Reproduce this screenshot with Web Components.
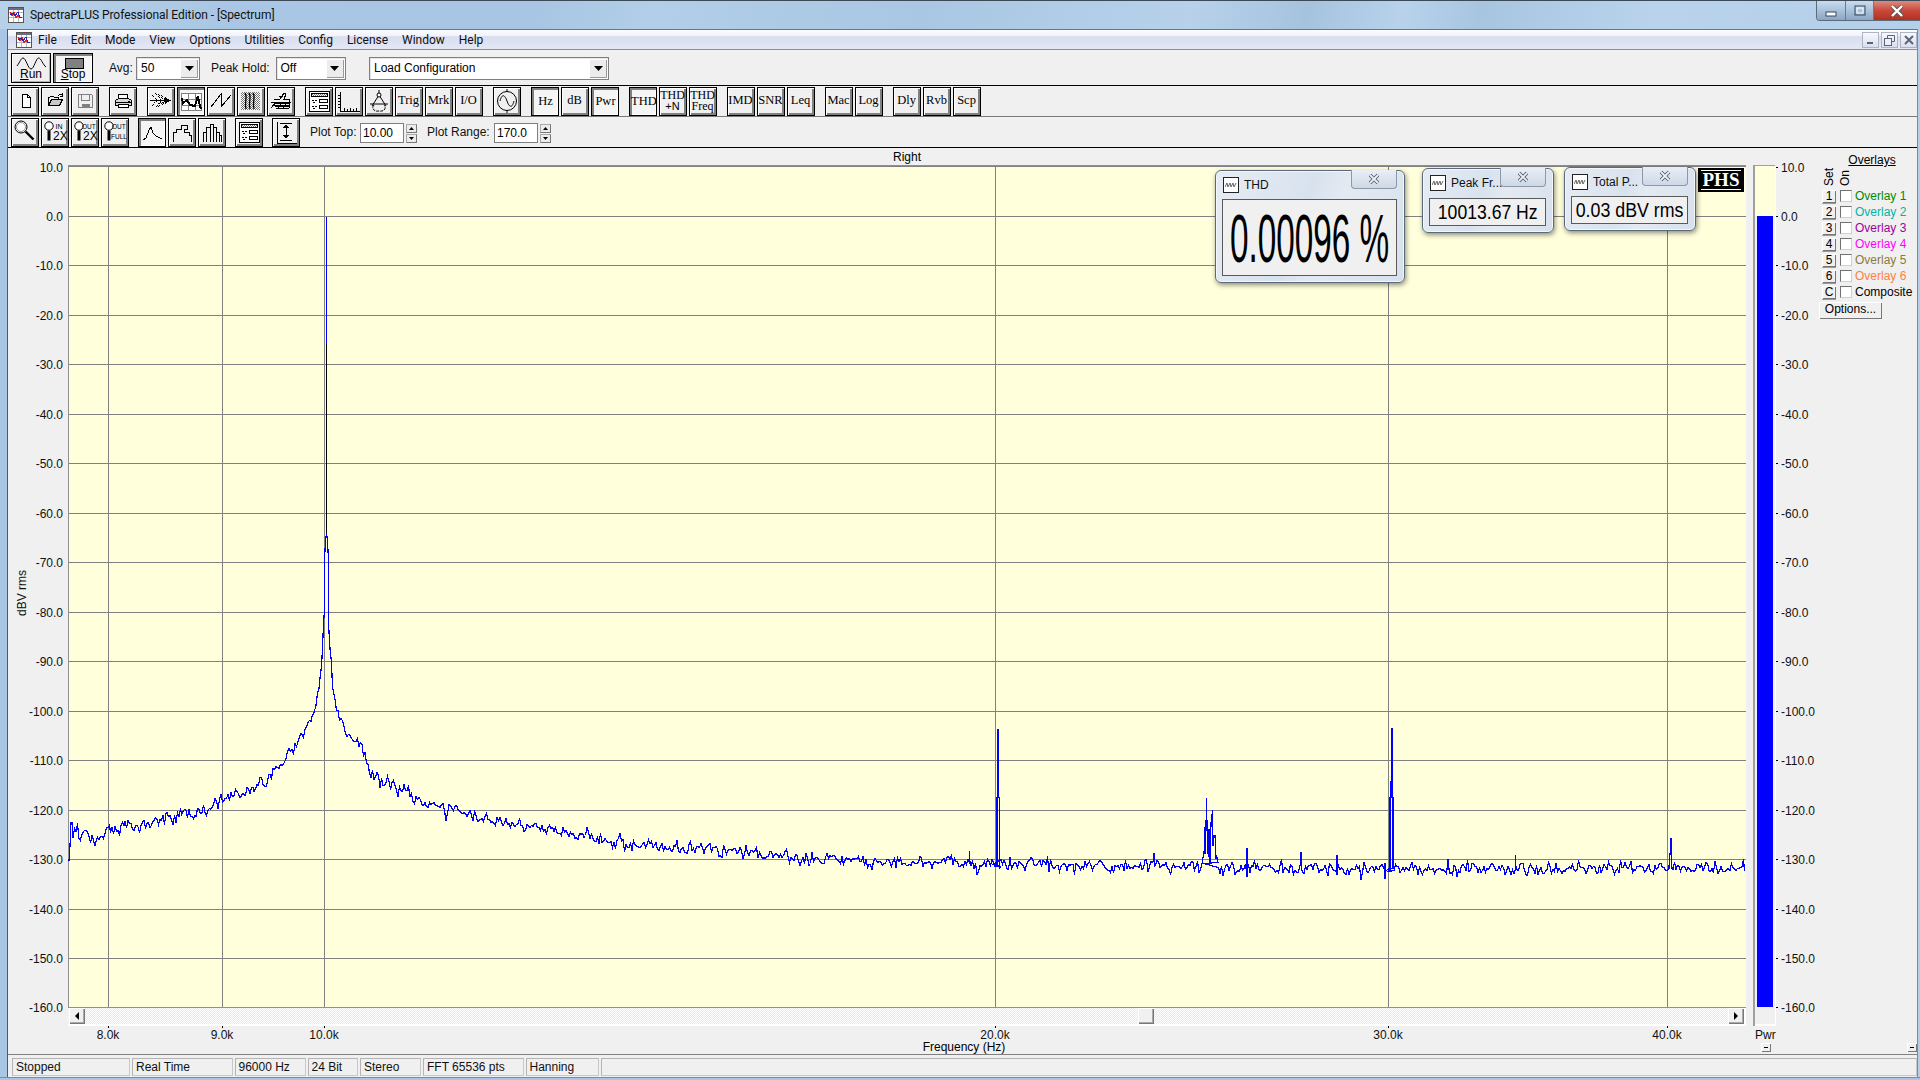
<!DOCTYPE html>
<html><head><meta charset="utf-8"><title>SpectraPLUS</title>
<style>
html,body{margin:0;padding:0;background:#f0f0f0;overflow:hidden}
body{font:12px "Liberation Sans",Arial,sans-serif;color:#000}
</style></head><body>
<sp-app>
  <sp-titlebar slot="top" text="SpectraPLUS Professional Edition - [Spectrum]"></sp-titlebar>
  <sp-menubar slot="menu" items="File,Edit,Mode,View,Options,Utilities,Config,License,Window,Help"></sp-menubar>

  <sp-toolbar slot="bars" edge="#000" h="36" gap="0">
    <sp-tool big icon="run" label="Run" under="R"></sp-tool>
    <sp-tool big pressed icon="stop" label="Stop" under="S" style="margin-left:2px"></sp-tool>
    <sp-label style="margin-left:16px;width:27px">Avg:</sp-label>
    <sp-combo value="50" style="width:64px"></sp-combo>
    <sp-label style="margin-left:11px;width:64.5px">Peak Hold:</sp-label>
    <sp-combo value="Off" style="width:70px"></sp-combo>
    <sp-combo value="Load Configuration" style="width:240px;margin-left:23.5px"></sp-combo>
  </sp-toolbar>

  <sp-toolbar slot="bars" edge="#7a7a7a" h="31" gap="10">
    <sp-group>
      <sp-tool icon="new"></sp-tool><sp-tool icon="open"></sp-tool><sp-tool icon="save"></sp-tool>
    </sp-group>
    <sp-group><sp-tool icon="print"></sp-tool></sp-group>
    <sp-group>
      <sp-tool icon="fwd"></sp-tool><sp-tool pressed icon="time"></sp-tool><sp-tool icon="saw"></sp-tool><sp-tool icon="water"></sp-tool><sp-tool icon="d3"></sp-tool>
    </sp-group>
    <sp-group>
      <sp-tool icon="form"></sp-tool><sp-tool icon="axis"></sp-tool><sp-tool icon="compass"></sp-tool><sp-tool label="Trig" serif></sp-tool><sp-tool label="Mrk" serif></sp-tool><sp-tool label="I/O" serif></sp-tool>
    </sp-group>
    <sp-group><sp-tool icon="gen"></sp-tool></sp-group>
    <sp-group>
      <sp-tool pressed label="Hz" serif></sp-tool><sp-tool label="dB" serif></sp-tool><sp-tool pressed label="Pwr" serif></sp-tool>
    </sp-group>
    <sp-group>
      <sp-tool pressed label="THD" serif></sp-tool><sp-tool label="THD" sub="+N" serif></sp-tool><sp-tool label="THD" sub="Freq" serif></sp-tool>
    </sp-group>
    <sp-group>
      <sp-tool label="IMD" serif></sp-tool><sp-tool label="SNR" serif></sp-tool><sp-tool label="Leq" serif></sp-tool>
    </sp-group>
    <sp-group>
      <sp-tool label="Mac" serif></sp-tool><sp-tool label="Log" serif></sp-tool>
    </sp-group>
    <sp-group>
      <sp-tool label="Dly" serif></sp-tool><sp-tool label="Rvb" serif></sp-tool><sp-tool label="Scp" serif></sp-tool>
    </sp-group>
  </sp-toolbar>

  <sp-toolbar slot="bars" edge="#000" h="31" gap="9">
    <sp-group>
      <sp-tool icon="mag"></sp-tool><sp-tool icon="in2"></sp-tool><sp-tool icon="out2"></sp-tool><sp-tool icon="outfull"></sp-tool>
    </sp-group>
    <sp-group>
      <sp-tool pressed icon="line"></sp-tool><sp-tool icon="stair"></sp-tool><sp-tool icon="bars"></sp-tool>
    </sp-group>
    <sp-group><sp-tool icon="form"></sp-tool></sp-group>
    <sp-group><sp-tool icon="range"></sp-tool></sp-group>
    <sp-label style="width:50px;margin-left:1px">Plot Top:</sp-label>
    <sp-spin value="10.00" style="margin-left:-9px"></sp-spin>
    <sp-label style="width:64px;margin-left:1px">Plot Range:</sp-label>
    <sp-spin value="170.0" style="margin-left:-6px"></sp-spin>
  </sp-toolbar>

  <sp-chart slot="main"></sp-chart>
  <sp-meter slot="main"></sp-meter>
  <sp-overlays slot="main"></sp-overlays>

  <sp-statusbar slot="status" cells="Stopped:118,Real Time:100.5,96000 Hz:71,24 Bit:50.5,Stereo:61,FFT 65536 pts:100.5,Hanning:73,:0"></sp-statusbar>

  <sp-float slot="float" win-title="THD" value="0.00096 %" style="left:1215px;top:170px;width:190px;height:113px;--fs:68px;--sx:.49;--top:28px;--closew:46px;--closeh:19px"></sp-float>
  <sp-float slot="float" win-title="Peak Fr..." value="10013.67 Hz" style="left:1422px;top:168px;width:132px;height:65px;--fs:20px;--sx:.88;--top:29px;--closew:46px;--closeh:19px"></sp-float>
  <sp-float slot="float" win-title="Total P..." value="0.03 dBV rms" style="left:1564px;top:167px;width:132px;height:64px;--fs:20px;--sx:.89;--top:28px;--closew:46px;--closeh:19px"></sp-float>
  <sp-badge slot="float" style="left:1698px;top:168px">PHS</sp-badge>
</sp-app>

<template id="app-t">
<style>
:host{display:block;position:relative;width:1920px;height:1080px;overflow:hidden;background:#a9c7e4}
.client{display:flex;flex-direction:column;position:absolute;z-index:0;inset:29px 3px 3px 7px;border-left:1px solid #4d5a68;background:#f0f0f0}
.main{display:flex;flex:1;min-height:0}
.bottom{position:absolute;left:0;right:0;bottom:0;height:3px;background:#a9c7e4;border-top:1px solid #7d8a98;box-sizing:border-box}
.right{position:absolute;top:29px;bottom:0;right:0;width:3px;background:#b3cfe9;border-left:1px solid #7d8a98;box-sizing:border-box}
</style>
<slot name="top"></slot>
<div class="client">
  <slot name="menu"></slot>
  <slot name="bars"></slot>
  <div class="main"><slot name="main"></slot></div>
  <slot name="status"></slot>
</div>
<div class="right"></div><div class="bottom"></div>
<slot name="float"></slot>
</template>

<script>
function shadow(el,html){const r=el.attachShadow({mode:'open'});r.innerHTML=html;return r;}
const appIcon=`<svg width="16" height="16" viewBox="0 0 16 16" shape-rendering="crispEdges"><rect x=".5" y=".5" width="15" height="15" fill="#fff" stroke="#555"/><path d="M1 5.5h14M1 10.5h14M5.5 1v14M10.5 1v14" stroke="#b8b8b8"/><rect x="1" y="1" width="14" height="2" fill="#6d6d80"/><path d="M2 5l2 4 2-4 2 6 2-3 2 3 2-1" fill="none" stroke="#d22"/><path d="M2 8l3-2 2 3 3-4 2 6 2-1" fill="none" stroke="#22c"/></svg>`;

customElements.define('sp-app',class extends HTMLElement{constructor(){super();
  this.attachShadow({mode:'open'}).appendChild(document.getElementById('app-t').content.cloneNode(true));}});

customElements.define('sp-titlebar',class extends HTMLElement{connectedCallback(){
 shadow(this,`<style>
 :host{display:flex;align-items:center;height:29px;box-sizing:border-box;border-top:1px solid #3c4a58;position:relative;
 background:linear-gradient(100deg,#b8d1e9 0,#a9c7e4 12%,#a8c6e3 28%,#b2cee8 34%,#a9c7e3 48%,#b7d1ea 62%,#a6c3de 68%,#b8d2eb 73%,#a8c5e0 77%,#b9d3ec 86%,#b4cfe9 100%);
 padding-left:8px;gap:6px;font:12px Roboto,"Open Sans",sans-serif;letter-spacing:-.04px;color:#111}
 .caps{position:absolute;right:0;top:0;display:flex;height:20px;border:1px solid #5b6b7c;border-top:0;border-right:0;border-radius:0 0 0 4px;overflow:hidden;box-sizing:border-box}
 .c{display:grid;place-items:center;height:100%;border-right:1px solid #6a7a8c;background:linear-gradient(#c9dbee,#a9c2dc 50%,#8ba6c4)}
 .x{background:linear-gradient(#dc8c7e,#c9493a 50%,#b23020);border:0}
 </style>${appIcon}<span>${this.getAttribute('text')}</span>
 <div class="caps">
 <div class="c" style="width:28px"><svg width="12" height="6" style="margin-top:7px"><rect x="1" y="1" width="10" height="4" fill="#fff" stroke="#39485a"/></svg></div>
 <div class="c" style="width:27px"><svg width="12" height="11"><rect x="1" y="1" width="10" height="9" fill="none" stroke="#39485a"/><rect x="3" y="3" width="6" height="5" fill="none" stroke="#fff"/></svg></div>
 <div class="c x" style="width:46px"><svg width="14" height="12"><path d="M2 1l10 10M12 1L2 11" stroke="#555" stroke-width="4"/><path d="M2 1l10 10M12 1L2 11" stroke="#fff" stroke-width="2.4"/></svg></div>
 </div>`);
}});

customElements.define('sp-menubar',class extends HTMLElement{connectedCallback(){
 const items=this.getAttribute('items').split(',').map(t=>`<span>${t}</span>`).join('');
 shadow(this,`<style>
 :host{display:flex;align-items:center;height:21px;box-sizing:border-box;border-top:1px solid #6c7580;border-bottom:1px solid #8b8f9a;position:relative;
 background:linear-gradient(#fbfcfe 0,#f1f4fa 30%,#d8ddf0 35%,#e4e8f5 100%);padding-left:8px;font:12px Roboto,"Open Sans",sans-serif;color:#111;flex:none}
 .m{display:flex;gap:13.9px;margin-left:6px}
 .b{position:absolute;right:0;top:2px;display:flex;gap:2px}
 .b div{width:17px;height:16px;box-sizing:border-box;border:1px solid #aeb4c4;background:linear-gradient(#f8f9fd,#d9dff0);display:grid;place-items:center}
 </style>${appIcon}<div class="m">${items}</div>
 <div class="b">
 <div><svg width="9" height="9"><rect x="1" y="6" width="6" height="2" fill="#5a6472"/></svg></div>
 <div><svg width="11" height="11" fill="none" stroke="#5a6472"><path d="M3.5 3V.5h7v6H8"/><rect x=".5" y="3.5" width="7" height="7" fill="#eef"/></svg></div>
 <div><svg width="10" height="10"><path d="M1 1l8 8M9 1L1 9" stroke="#5a6472" stroke-width="2"/></svg></div>
 </div>`);
}});

customElements.define('sp-toolbar',class extends HTMLElement{connectedCallback(){
 shadow(this,`<style>
 :host{display:flex;align-items:center;flex:none;box-sizing:border-box;padding:0 0 0 3px;height:${this.getAttribute('h')}px;border-bottom:1px solid ${this.getAttribute('edge')};gap:${this.getAttribute('gap')}px}
 </style><slot></slot>`);
}});
customElements.define('sp-group',class extends HTMLElement{connectedCallback(){
 shadow(this,`<style>:host{display:flex;gap:2px}</style><slot></slot>`);
}});
customElements.define('sp-label',class extends HTMLElement{connectedCallback(){
 shadow(this,`<style>:host{display:block;flex:none;white-space:nowrap;font:12px "Liberation Sans",sans-serif;color:#111}</style><slot></slot>`);
}});

const ICONS={
 run:`<path d="M6 13C9 9 10 5 12 5C15 5 17 16 20 16C23 16 25 5 27.6 5C30 5 32 12 35 14" fill="none" stroke="#000"/>`,
 stop:`<rect x="12.5" y="5.5" width="18" height="10" fill="#808080" stroke="#000"/>`,
 new:`<path d="M11.5 7.5h5l3 3v10h-8z" fill="#fff" stroke="#000"/><path d="M16.5 7.5v3h3" fill="none" stroke="#000"/>`,
 open:`<path d="M7.5 18.5v-8h1l1-1h3l1 1h4v2" fill="none" stroke="#000"/><path d="M7.5 18.5h11l3-6h-11z" fill="#c8c8c8" stroke="#000"/><path d="M17 9c1-2 3-2 4-1M21.5 6v3h-3" fill="none" stroke="#000"/>`,
 save:`<path d="M7.5 7.5h13l1 1v12h-14z" fill="#f0f0f0" stroke="#808080"/><rect x="10.5" y="7.5" width="8" height="6" fill="none" stroke="#808080"/><rect x="10.5" y="16.5" width="8" height="4" fill="#808080"/>`,
 print:`<path d="M9.5 7.5h9v5h-9z" fill="#fff" stroke="#000"/><path d="M6.5 13.5l3-2h10l3 2v5h-16z" fill="#d8d8d8" stroke="#000"/><path d="M7 15.5h15" stroke="#000"/><rect x="9.5" y="17.5" width="10" height="3" fill="#fff" stroke="#000"/><rect x="19" y="14" width="2" height="1" fill="#000"/>`,
 fwd:`<path d="M3 13.5h21" stroke="#000"/><path d="M5 8l5 5.5-5 5.5M8 6l7 7.5-7 7.5M11 7l7 6.5-7 6.5M14 8l6 5.5-6 5.5" fill="none" stroke="#000" stroke-dasharray="1 1"/><path d="M18 10l5 3.5-5 3.5z" fill="#000"/>`,
 time:`<rect x="4.5" y="6.5" width="20" height="17" fill="#fff" stroke="#808080"/><path d="M11.5 6v17M18.5 6v17M4 12.5h20M4 18.5h20" stroke="#808080"/><path d="M5 11l1 5 4-3 3 5 5 1 3-10 2 10 1 3" fill="none" stroke="#000" stroke-width="2"/>`,
 saw:`<path d="M4 20L14 7v13L24 8" fill="none" stroke="#000"/>`,
 water:`<rect x="4" y="5" width="19" height="18" fill="url(#dither)"/><path d="M8 6c3 4-1 8 1 16M12 6c3 4-1 8 1 16M16 6c3 4-1 8 1 16" fill="none" stroke="#000" stroke-width="1.3" shape-rendering="auto"/>`,
 d3:`<path d="M4 21l5-6h15M5 18h17M4 15h6M7 12h6l4-6 2 1-2 5h6l-1 9H9" fill="none" stroke="#000"/><path d="M8 16h14M8 19h14M12 9h4M11 21l4-6M16 21l4-6" stroke="#000"/>`,
 form:`<rect x="4.5" y="4.5" width="20" height="20" fill="#fff" stroke="#000"/><rect x="6.5" y="6.5" width="16" height="3" fill="url(#dither)" stroke="#000"/><rect x="14.5" y="12.5" width="8" height="3" fill="#fff" stroke="#000"/><rect x="14.5" y="18.5" width="8" height="3" fill="#fff" stroke="#000"/><path d="M7 13h2v1H7zM10 13h2v1h-2zM8 15h2v1H8zM7 19h2v1H7zM10 19h2v1h-2zM8 21h2v1H8z" fill="#000"/>`,
 axis:`<path d="M5.5 5v19H25" fill="none" stroke="#000"/><path d="M3 8h2M3 11h2M3 14h2M3 17h2M3 20h2M9.5 21v3M12.5 22v2M15.5 21v3M18.5 22v2M21.5 21v3" stroke="#000"/>`,
 compass:`<path d="M14 3v5M14 8L7 19M14 8l7 11M5 17h18" stroke="#000" fill="none"/><circle cx="14" cy="8" r="2" fill="#fff" stroke="#000"/><path d="M9 18c-3 3 0 7 5 6 5 1 8-3 5-6" fill="none" stroke="#000" stroke-dasharray="3 1"/>`,
 gen:`<circle cx="14" cy="14" r="9.5" fill="none" stroke="#000"/><path d="M14 2v3M14 23v3" stroke="#000"/><path d="M7 14c2-8 5-6 7 0s5 8 7 0" fill="none" stroke="#000"/>`,
 mag:`<circle cx="10" cy="9" r="6" fill="#fff" stroke="#000"/><circle cx="10" cy="9" r="4.5" fill="none" stroke="#999"/><path d="M14.5 13.5l8 8" stroke="#000" stroke-width="2.4"/>`,
 in2:`<circle cx="8" cy="8" r="4.2" fill="#fff" stroke="#000"/><path d="M8 12.5v10" stroke="#000" stroke-width="3"/><text x="14.5" y="11" font-family="Liberation Sans" font-size="7">IN</text><text x="12" y="22" font-family="Liberation Sans" font-size="12">2X</text>`,
 out2:`<circle cx="8" cy="8" r="4.2" fill="#fff" stroke="#000"/><path d="M8 12.5v10" stroke="#000" stroke-width="3"/><text x="11" y="11" font-family="Liberation Sans" font-size="6.5">OUT</text><text x="12" y="22" font-family="Liberation Sans" font-size="12">2X</text>`,
 outfull:`<circle cx="8" cy="8" r="4.2" fill="#fff" stroke="#000"/><path d="M8 12.5v10" stroke="#000" stroke-width="3"/><text x="11" y="11" font-family="Liberation Sans" font-size="6.5">OUT</text><text x="10" y="20.5" font-family="Liberation Sans" font-size="6.5">FULL</text>`,
 line:`<path d="M5 22l3-2 3-8 2-3 2 6 3 3 6 3" fill="none" stroke="#000"/>`,
 stair:`<path d="M5.5 24v-10h3v-3h5v-4h6v4h-3v3h5v3h2v7" fill="none" stroke="#000"/>`,
 bars:`<path d="M5.5 24V14h3V9h4V6h3v3h3v5h3v3h2v7M8.5 14v10M12.5 9v15M15.5 9v15M18.5 14v10M21.5 17v7" fill="none" stroke="#000"/>`,
 range:`<path d="M5.5 4v21H25M8 5h12M8 22h12" fill="none" stroke="#000"/><path d="M14 7v13" stroke="#000"/><path d="M11 10l3-4 3 4zM11 17l3 4 3-4z" fill="#000"/>`
};

customElements.define('sp-tool',class extends HTMLElement{connectedCallback(){
 const big=this.hasAttribute('big'),pressed=this.hasAttribute('pressed'),ic=this.getAttribute('icon'),
   label=this.getAttribute('label')||'',sub=this.getAttribute('sub'),under=this.getAttribute('under');
 const w=big?40:28,h=big?30:29;
 let body='';
 const labelHtml=under?`<u>${under}</u>${label.slice(1)}`:label;
 if(big){
  body=`<svg width="38" height="28" viewBox="1 1 38 28">${ICONS[ic]}</svg><span class="biglab">${labelHtml}</span>`;
 }else if(ic){
  body=`<svg width="26" height="27" viewBox="1 1 26 27" shape-rendering="${/mag|in2|out|gen|compass/.test(ic)?'auto':'crispEdges'}"><defs><pattern id="dither" width="2" height="2" patternUnits="userSpaceOnUse"><rect width="2" height="2" fill="#fff"/><rect width="1" height="1" fill="#777"/><rect x="1" y="1" width="1" height="1" fill="#777"/></pattern></defs>${ICONS[ic]}</svg>`;
 }else if(sub){
  body=`<span class="two"><span>${label}</span><span class="${sub==='+N'?'sans':''}">${sub}</span></span>`;
 }else body=`<span>${label}</span>`;
 shadow(this,`<style>
 :host{display:grid;place-items:center;flex:none;box-sizing:border-box;position:relative;width:${w}px;height:${h}px;border:1px solid #000;background:${pressed?'#f5f5f5':'#f0f0f0'};
 box-shadow:${pressed?'inset 2px 2px 0 #808080,inset -1px -1px 0 #fff':(big?'inset 1px 1px 0 #fff,inset -1px -1px 0 #b0b0b0':'inset 1px 1px 0 #fff,inset -2px -2px 0 #808080')};
 font:12.5px "Liberation Serif",serif;color:#000;overflow:hidden}
 svg{position:absolute;left:0;top:0}
 span{display:block;white-space:nowrap;line-height:13px;${pressed?'padding:1px 0 0 1px':'margin:-1px 0 0 -1px'}}
 .two{text-align:center;line-height:11px;font-size:12px}.two span{padding:0;margin:0;line-height:11px}
 .sans{font:11px "Liberation Sans",sans-serif}
 .biglab{position:absolute;left:0;right:0;bottom:1px;text-align:center;font:12px "Liberation Sans",sans-serif;padding:0;margin:0}
 </style>${body}`);
}});

customElements.define('sp-combo',class extends HTMLElement{connectedCallback(){
 shadow(this,`<style>
 :host{display:flex;flex:none;align-items:center;box-sizing:border-box;height:23px;background:#fff;border:1px solid #7f7f7f;position:relative;padding-left:4px;margin-top:1px;
 font:12px "Liberation Sans",sans-serif;color:#000;box-shadow:inset 1px 1px 0 #e6e6e6}
 .a{position:absolute;right:1px;top:1px;bottom:1px;width:18px;background:#ececec;box-shadow:inset 1px 1px 0 #fff,inset -1px -1px 0 #9a9a9a;display:grid;place-items:center}
 </style><span>${this.getAttribute('value')}</span><div class="a"><svg width="9" height="5"><path d="M0 0h9L4.5 5z" fill="#000"/></svg></div>`);
}});
customElements.define('sp-spin',class extends HTMLElement{connectedCallback(){
 shadow(this,`<style>
 :host{display:flex;flex:none;align-items:center;gap:2px;font:12px "Liberation Sans",sans-serif;color:#000;margin-top:1px}
 .i{box-sizing:border-box;width:44px;height:20px;background:#fff;border:1px solid #7f7f7f;padding:2px 2px;line-height:14px}
 .s{display:flex;flex-direction:column;width:11px;height:19px;gap:1px;margin-top:1px}
 .s div{flex:1;background:#ececec;border:1px solid #aaa;border-right-color:#777;border-bottom-color:#777;box-sizing:border-box;display:grid;place-items:center}
 </style><div class="i">${this.getAttribute('value')}</div><div class="s"><div><svg width="5" height="3"><path d="M0 3h5L2.5 0z"/></svg></div><div><svg width="5" height="3"><path d="M0 0h5L2.5 3z"/></svg></div></div>`);
}});

/* ------- spectrum trace ------- */
function rng(seed){return()=>{seed|=0;seed=seed+0x6D2B79F5|0;let t=Math.imul(seed^seed>>>15,1|seed);t=t+Math.imul(t^t>>>7,61|t)^t;return((t^t>>>14)>>>0)/4294967296;};}
function lerpTable(tab,x){for(let i=1;i<tab.length;i++){if(x<=tab[i][0]){const a=tab[i-1],b=tab[i];return a[1]+(b[1]-a[1])*(x-a[0])/(b[0]-a[0]);}}return tab[tab.length-1][1];}
function trace(){
 const r=rng(7321);
 const L=[[72,826],[80,833],[95,837],[108,830],[127,827],[153,822],[170,817],[193,813],[210,807],[223,800],[240,793],[260,782],[277,767],[293,750],[303,733],[310,722]];
 const R=[[334,694],[338,710],[343,723],[347,740],[352,737],[360,743],[366,765],[376,776],[393,783],[427,803],[460,813],[490,818],[612,842],[735,853],[857,861],[995,864],[1100,865],[1200,866],[1220,869],[1390,869],[1500,868],[1745,868]];
 const pts=[[68,860],[69,860],[70,845],[71,822],[72,822]];
 let x=73,prev=0;
 const noise=(amp)=>{const w=(r()+r()-1)*2*amp;prev=prev*.25+w;let n=prev; if(r()<.06) n-=amp*1.4; if(r()<.05) n+=amp*1.2; return n;};
 while(x<312){const y=lerpTable(L,x)+noise(x>300?2.8:4.1);pts.push([x,y]);x+=1.45;}
 [[312,716],[314,712],[316,705],[317.5,693],[319,688],[320,677],[321.7,666],[322.7,647],[323.3,623],[324.3,610],[324.3,560],[325.5,540],[326.5,533],[326.5,216],[326.5,533],[327.5,540],[328.3,560],[328.3,623],[330,648],[331.3,662],[332.3,687],[334,694]].forEach(p=>pts.push(p));
 x=335;
 const spikes=[[969,851],[1154,853],[1247,848],[1301,852],[1337,855],[1516,855],[1385,878]];
 while(x<1745){
  if(x>994&&x<1001||x>1204&&x<1218||x>1388&&x<1394||x>1668&&x<1672){x+=1.5;continue;}
  const amp=x<480?3.8:(x<700?3.4:3.7);
  let y=lerpTable(R,x)+noise(amp);
  pts.push([x,y]);
  const s=spikes.find(q=>Math.abs(q[0]-x)<=.75);
  if(s)pts.push([x,s[1]]),pts.push([x+.7,lerpTable(R,x)]);
  x+=1.5;
  if(Math.abs(x-994)<.75){[[995,866],[997,866],[997,797],[998,797],[998,729],[998.7,729],[998.7,797],[999.7,797],[999.7,868],[1000.7,866]].forEach(p=>pts.push(p));}
  if(Math.abs(x-1204)<.75){[[1204,851],[1205,853],[1205,827],[1206,827],[1206.4,798],[1207,825],[1207.5,850],[1208.5,856],[1209,829],[1210,863],[1211,823],[1212.3,810],[1213,845],[1214,835],[1215,835],[1216,858],[1216.7,855],[1218,862]].forEach(p=>pts.push(p));}
  if(Math.abs(x-1388)<.75){[[1389,868],[1390,868],[1390,797],[1391,797],[1391.3,728],[1392,728],[1392,797],[1392.8,797],[1392.8,868],[1394,866]].forEach(p=>pts.push(p));}
  if(Math.abs(x-1668)<.75){[[1669,868],[1669.3,853],[1670.3,853],[1670.3,838],[1671,838],[1671,853],[1671.8,868]].forEach(p=>pts.push(p));}
 }
 pts.push([1744.5,871]);
 return pts.map((p,i)=>(i?'L':'M')+(Math.round(p[0]*2)/2).toFixed(1)+' '+(Math.round(p[1])+.5)).join('');
}
const yOf=db=>Math.min(1007,216+Math.floor(-4.95*db));
const xOf=f=>Math.floor(324.5+671.3*Math.log2(f/10000));

customElements.define('sp-chart',class extends HTMLElement{connectedCallback(){
 const dbs=[];for(let d=10;d>=-160;d-=10)dbs.push(d);
 const freqs=[[8000,'8.0k'],[9000,'9.0k'],[10000,'10.0k'],[20000,'20.0k'],[30000,'30.0k'],[40000,'40.0k']];
 const h=dbs.map(d=>`<path d="M68 ${yOf(d)+.5}H1746"/>`).join('');
 const v=freqs.map(f=>`<path d="M${xOf(f[0])+.5} 166V1007"/>`).join('');
 const ylab=dbs.map(d=>`<text x="63" y="${(d==10?167:yOf(d))+4.5}" text-anchor="end">${d.toFixed(1)}</text>`).join('');
 const xlab=freqs.map(f=>`<path d="M${xOf(f[0])+.5} 1026v2" stroke="#000"/><text x="${xOf(f[0])}" y="1039" text-anchor="middle">${f[1]}</text>`).join('');
 shadow(this,`<style>
 :host{display:grid;flex:none;width:1738px;grid-template-columns:60px 1678px;grid-template-rows:18px 841px 19px 1fr;font:12px "Liberation Sans",sans-serif;color:#000}
 svg{display:block;overflow:visible}
 text{font:12px "Liberation Sans",sans-serif;fill:#111}
 .t{grid-column:2;text-align:center;line-height:17px;padding-top:.5px;height:17px}
 .sb{grid-column:2;box-sizing:border-box;height:19px;border-bottom:2px solid #fff;border-right:2px solid #fff;display:flex;justify-content:space-between;position:relative;
   background:repeating-conic-gradient(#fff 0 25%,#e9e9e9 0 50%) 0 0/2px 2px;padding-left:1px}
 .btn{width:16px;height:16px;margin-top:1px;background:#f0f0f0;box-shadow:inset 1px 1px 0 #fff,inset -1px -1px 0 #777,inset -2px -2px 0 #aaa;display:grid;place-items:center}
 .th{position:absolute;left:1069.5px;top:1px;width:16px;height:16px;background:#f0f0f0;box-shadow:inset 1px 1px 0 #fff,inset -1px -1px 0 #777,inset -2px -2px 0 #aaa}
 .freq{position:absolute;left:0;top:14px;width:1792px;text-align:center}
 .xl{grid-column:2;position:relative}
 .plot{grid-row:2;grid-column:2;position:relative;z-index:1}
 </style>
 <div class="t" style="grid-row:1">Right</div>
 <svg style="grid-row:2;grid-column:1" width="60" height="841" viewBox="8 166 60 841"><g>${ylab}</g>
   <text transform="translate(26 593) rotate(-90)" text-anchor="middle">dBV rms</text></svg>
 <svg class="plot" width="1678" height="841" viewBox="68 166 1678 841">
   <rect x="68" y="166" width="1678" height="841" fill="#ffffdc"/>
   <g stroke="#808080" shape-rendering="crispEdges" fill="none">${h}${v}</g>
   <path d="M68.5 166V1008M68 165.5H1746M68 1007.5H1746" stroke="#909090" fill="none" shape-rendering="crispEdges"/>
   <path d="${trace()}" fill="none" stroke="#0000ff" stroke-width="1.2" shape-rendering="crispEdges"/>
   <path d="M326.5 344V533" stroke="#000" shape-rendering="crispEdges"/>
 </svg>
 <div class="sb" style="grid-row:3">
   <div class="btn"><svg width="6" height="8"><path d="M5 0v8L1 4z"/></svg></div>
   <div class="th"></div>
   <div class="btn"><svg width="6" height="8"><path d="M1 0v8l4-4z"/></svg></div>
 </div>
 <div class="xl" style="grid-row:4">
   <svg width="1678" height="28" viewBox="68 1026 1678 28">${xlab}</svg>
   <div class="freq">Frequency (Hz)</div>
 </div>`);
}});

customElements.define('sp-meter',class extends HTMLElement{connectedCallback(){
 const dbs=[];for(let d=10;d>=-160;d-=10)dbs.push(d);
 const lab=dbs.map(d=>`<path d="M1776 ${(d==10?167:yOf(d))+.5}h2" stroke="#000"/><text x="1781" y="${(d==10?167:yOf(d))+4.5}">${d.toFixed(1)}</text>`).join('');
 shadow(this,`<style>
 :host{display:block;position:relative;flex:none;width:74px;height:906px}
 text{font:12px "Liberation Sans",sans-serif;fill:#111}
 svg{display:block;overflow:visible}
 sp-mini{position:absolute;left:15px;top:895px}
 </style>
 <svg width="74" height="906" viewBox="1746 148 74 906" shape-rendering="crispEdges">
  <rect x="1755" y="166" width="21" height="860" fill="#fff"/>
  <rect x="1755" y="166" width="20" height="858" fill="#f0f0f0"/>
  <rect x="1755" y="166" width="20" height="50" fill="#ffffdc"/>
  <rect x="1757" y="216" width="16" height="791" fill="#0000ff"/>
  <rect x="1753" y="165" width="2" height="861" fill="#a0a0a0"/>
  <rect x="1753" y="165" width="22" height="1" fill="#a0a0a0"/>
  ${lab}
  <text x="1755" y="1039">Pwr</text>
 </svg><sp-mini></sp-mini>`);
}});
customElements.define('sp-mini',class extends HTMLElement{connectedCallback(){
 shadow(this,`<style>:host{display:grid;place-items:center;width:10px;height:9px;background:#f0f0f0;box-shadow:inset 1px 1px 0 #fff,inset -1px -1px 0 #777}</style><svg width="4" height="1"><rect width="4" height="1"/></svg>`);
}});

customElements.define('sp-overlays',class extends HTMLElement{connectedCallback(){
 const rows=[['1','Overlay 1','#008a00'],['2','Overlay 2','#00b4a8'],['3','Overlay 3','#a000a0'],['4','Overlay 4','#ff00ff'],['5','Overlay 5','#8c7a3c'],['6','Overlay 6','#ff8040'],['C','Composite','#000']];
 shadow(this,`<style>
 :host{display:flex;flex-direction:column;flex:none;width:97px;height:906px;font:12px "Liberation Sans",sans-serif;color:#000;position:relative}
 .h{margin-top:6px;height:13px;line-height:13px;text-align:center;text-decoration:underline;padding-left:7px;white-space:nowrap}
 .v{display:flex;height:19px;gap:3px;padding-left:3px}
 .v span{writing-mode:vertical-rl;transform:rotate(180deg);line-height:13px;height:19px;width:13px;text-align:left}
 .rows{display:flex;flex-direction:column;margin-top:2px}
 .r{display:flex;align-items:center;height:16px;padding-left:2px;white-space:nowrap}
 .n{box-sizing:border-box;width:14px;height:13px;line-height:12px;text-align:center;background:#f0f0f0;box-shadow:inset 1px 1px 0 #fff,inset -1px -1px 0 #777,0 1px 0 #999;font-size:12px}
 .c{box-sizing:border-box;width:12px;height:12px;margin:0 3px 0 4px;background:#fff;border:1px solid #6f6f6f;border-right-color:#d0d0d0;border-bottom-color:#d0d0d0}
 .o{box-sizing:border-box;margin-top:2px;margin-left:-1px;width:63px;height:17px;line-height:15px;text-align:center;background:#f0f0f0;box-shadow:inset 1px 1px 0 #fff,inset -1px -1px 0 #777}
 .end{position:absolute;left:87px;top:895px}
 </style>
 <div class="h">Overlays</div>
 <div class="v"><span>Set</span><span>On</span></div>
 <div class="rows">${rows.map(r=>`<div class="r"><div class="n">${r[0]}</div><div class="c"></div><span style="color:${r[2]}">${r[1]}</span></div>`).join('')}</div>
 <div class="o">Options...</div>
 <sp-mini class="end"></sp-mini>`);
}});

customElements.define('sp-statusbar',class extends HTMLElement{connectedCallback(){
 const cells=this.getAttribute('cells').split(',').map(s=>{const i=s.lastIndexOf(':');return [s.slice(0,i),+s.slice(i+1)];});
 shadow(this,`<style>
 :host{display:flex;flex:none;height:23px;box-sizing:border-box;border-top:1px solid #808080;padding:3px 0 2px 4px;gap:2px;font:12px "Liberation Sans",sans-serif;color:#111;background:#f0f0f0}
 div{box-sizing:border-box;height:18px;line-height:16px;padding-left:3px;border:1px solid #c8c8c8;border-top-color:#b4b4b4;border-left-color:#b4b4b4;white-space:nowrap}
 </style>${cells.map(c=>`<div style="${c[1]?`width:${c[1]}px`:'flex:1'}">${c[0]}</div>`).join('')}`);
}});

customElements.define('sp-float',class extends HTMLElement{connectedCallback(){
 shadow(this,`<style>
 :host{display:block;position:absolute;z-index:2;box-sizing:border-box;border:1px solid #5b6a7a;border-radius:6px;background:linear-gradient(110deg,#e6ecf4,#d8e2ee 45%,#e4eaf2 60%,#d6e0ec);box-shadow:1px 2px 5px rgba(0,0,0,.45),inset 0 0 0 1px #f3f6fa;font:12px "Liberation Sans",sans-serif;color:#111}
 .t{display:flex;align-items:center;gap:5px;height:28px;padding-left:7px;white-space:nowrap}
 .i{width:16px;height:16px;box-sizing:border-box;border:1px solid #222;background:#fff;flex:none;display:grid;place-items:center}
 .x{position:absolute;right:7px;top:-1px;width:var(--closew);height:var(--closeh);box-sizing:border-box;border:1px solid #8c98a8;border-top:0;border-radius:0 0 4px 4px;background:linear-gradient(#e9eef6,#ced8e6);display:grid;place-items:center}
 .b{position:absolute;left:6px;right:7px;top:var(--top);bottom:6px;box-sizing:border-box;border:1px solid #5a5a5a;background:#f0f0f0;display:flex;justify-content:center;align-items:center;color:#000}
 .w{width:0;display:flex;justify-content:center}
 .v{display:block;flex:none;font-size:var(--fs);line-height:1;transform:scaleX(var(--sx));white-space:nowrap}
 </style>
 <div class="t"><div class="i"><svg width="12" height="8"><path d="M0 6l2-4 1 4 2-4 1 4 2-4 1 4 2-4" fill="none" stroke="#666"/></svg></div><span>${this.getAttribute('win-title')}</span></div>
 <div class="x"><svg width="12" height="12"><path d="M2 2l8 8M10 2l-8 8" stroke="#4a5462" stroke-width="3.4"/><path d="M2 2l8 8M10 2l-8 8" stroke="#eef2f7" stroke-width="1.8"/></svg></div>
 <div class="b"><div class="w"><span class="v">${this.getAttribute('value')}</span></div></div>`);
}});
customElements.define('sp-badge',class extends HTMLElement{connectedCallback(){
 shadow(this,`<style>
 :host{display:block;position:absolute;z-index:2;width:46px;height:24px;background:#000;color:#fff;box-sizing:border-box;padding:2px 3px;font:bold 19px "Liberation Serif",serif}
 div{height:20px;border-top:1px solid #fff;border-bottom:1px solid #fff;line-height:18px;text-align:center;box-sizing:border-box}
 </style><div><slot></slot></div>`);
}});
</script>
</body></html>
